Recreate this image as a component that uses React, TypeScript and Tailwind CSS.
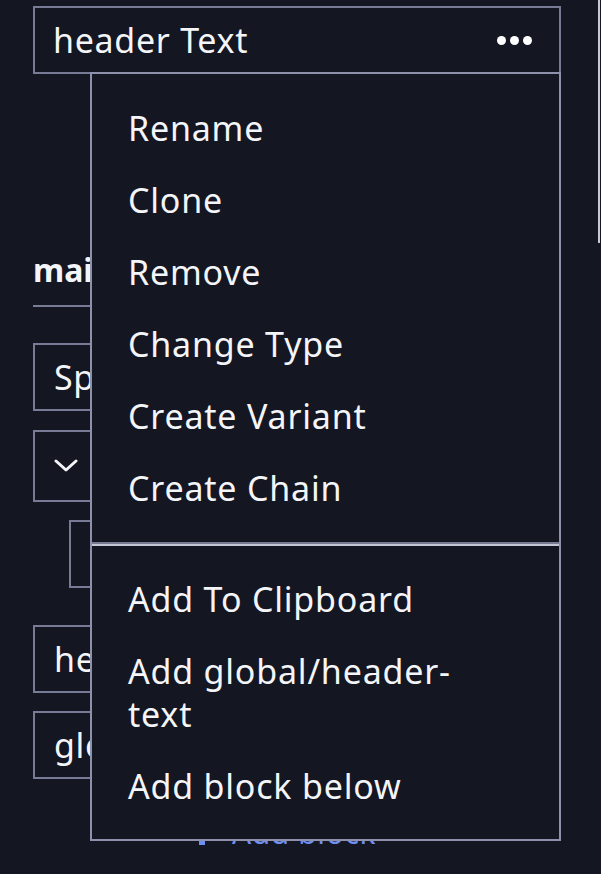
import React from 'react';

const firstGroup = ['Rename', 'Clone', 'Remove', 'Change Type', 'Create Variant', 'Create Chain'];
const secondGroup = ['Add To Clipboard', 'Add global/header-text', 'Add block below'];

function MenuItem({ label }: { label: string }) {
  return (
    <div className="py-[14.5px] pl-[36px] pr-[60px] leading-[43px] text-[34px] text-[#f4f5f9] tracking-[0.8px]">
      {label === 'Add global/header-text' ? (
        <>
          Add global/header-
          <br />
          text
        </>
      ) : (
        label
      )}
    </div>
  );
}

export default function App() {
  return (
    <div
      className="relative min-h-screen overflow-hidden bg-[#141622] text-[#f4f5f9]"
      style={{ fontFamily: '"Noto Sans", "Open Sans", sans-serif' }}
    >
      {/* scrollbar thumb */}
      <div className="absolute right-[1px] top-0 h-[243px] w-[2px] bg-[#c9cad0]" />

      <div className="w-[561px] pl-[33px] pt-[6px]">
        {/* block header */}
        <div className="flex h-[68px] items-center justify-between border-2 border-[#787b95] pl-[18px] pr-[27px]">
          <span className="text-[34px] leading-none tracking-[0.7px]">header Text</span>
          <span className="flex gap-[4px]">
            <span className="h-[9px] w-[9px] rounded-full bg-white" />
            <span className="h-[9px] w-[9px] rounded-full bg-white" />
            <span className="h-[9px] w-[9px] rounded-full bg-white" />
          </span>
        </div>

        {/* section behind the menu */}
        <div className="mt-[176px] border-b-2 border-[#787b95] pb-[15px] text-[32px] font-bold leading-[40px]">
          main
        </div>

        <div className="mt-[36px] flex h-[68px] items-center border-2 border-[#787b95] pl-[19px] text-[34px] tracking-[0.7px]">
          Spacing
        </div>

        <div className="mt-[19px] flex h-[72px] items-center border-2 border-[#787b95] pl-[18px]">
          <svg width="26" height="14" viewBox="0 0 26 14" fill="none">
            <path d="M3 2 L13 11 L23 2" stroke="#f4f5f9" strokeWidth="3" strokeLinecap="round" strokeLinejoin="round" />
          </svg>
        </div>

        <div className="ml-[36px] mt-[18px] h-[68px] border-2 border-[#787b95]" />

        <div className="mt-[37px] flex h-[68px] items-center border-2 border-[#787b95] pl-[19px] text-[34px] tracking-[0.7px]">
          header Text
        </div>

        <div className="mt-[18px] flex h-[68px] items-center border-2 border-[#787b95] pl-[19px] text-[34px] tracking-[0.7px]">
          global/header-text
        </div>

        <div className="mt-[34px] flex items-end pl-[166px] text-[30px] leading-[40px] tracking-[0.6px] text-[#6f8ff2]">
          <span className="mb-[8px] mr-[27px] h-[6px] w-[6px] bg-[#6f8ff2]" />
          Add block
        </div>
      </div>

      {/* dropdown menu */}
      <div className="absolute left-[90px] top-[72px] w-[471px] border-2 border-[#8d91ab] bg-[#141622]">
        <div className="border-b-2 border-[#777a93] py-[18px]">
          {firstGroup.map((l) => (
            <MenuItem key={l} label={l} />
          ))}
        </div>
        <div className="border-t-2 border-[#c3c6d4] py-[17px]">
          {secondGroup.map((l) => (
            <MenuItem key={l} label={l} />
          ))}
        </div>
      </div>
    </div>
  );
}
